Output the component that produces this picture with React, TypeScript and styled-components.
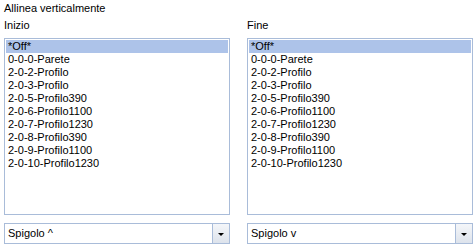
import React from "react";
import styled, { createGlobalStyle } from "styled-components";

const GlobalStyle = createGlobalStyle`
  body {
    margin: 0;
    background: #ffffff;
    font-family: "Liberation Sans", Arial, sans-serif;
    font-size: 11px;
    color: #000000;
  }
`;

const Page = styled.div`
  padding: 2px 2px 0 4px;
  width: 474px;
  box-sizing: border-box;
`;

const Title = styled.div`
  line-height: 13px;
  height: 13px;
  margin-bottom: 4px;
`;

const Columns = styled.div`
  display: grid;
  grid-template-columns: 226px 226px;
  column-gap: 17px;
`;

const Column = styled.div`
  display: flex;
  flex-direction: column;
`;

const Label = styled.div`
  line-height: 13px;
  height: 13px;
  margin-bottom: 6px;
`;

const ListBox = styled.div`
  box-sizing: border-box;
  height: 177px;
  border: 1px solid #a9bcd9;
  padding: 1px;
  background: #ffffff;
  overflow: hidden;
`;

const Item = styled.div<{ $selected?: boolean }>`
  height: 13px;
  line-height: 13px;
  padding-left: 2px;
  white-space: nowrap;
  background: ${(p) => (p.$selected ? "#adc3e9" : "transparent")};
`;

const Combo = styled.div`
  box-sizing: border-box;
  margin-top: 8px;
  height: 21px;
  border: 1px solid #a9bcd9;
  display: flex;
  background: #ffffff;
`;

const ComboText = styled.div`
  flex: 1;
  padding-left: 3px;
  line-height: 19px;
`;

const ComboButton = styled.div`
  width: 16px;
  border-left: 1px solid #a9bcd9;
  background: linear-gradient(#f4f6f9, #dde3ec);
  display: flex;
  align-items: center;
  justify-content: center;
`;

const Arrow = styled.div`
  width: 0;
  height: 0;
  border-left: 3px solid transparent;
  border-right: 3px solid transparent;
  border-top: 3px solid #000000;
  margin-top: 1px;
`;

const items = [
  "*Off*",
  "0-0-0-Parete",
  "2-0-2-Profilo",
  "2-0-3-Profilo",
  "2-0-5-Profilo390",
  "2-0-6-Profilo1100",
  "2-0-7-Profilo1230",
  "2-0-8-Profilo390",
  "2-0-9-Profilo1100",
  "2-0-10-Profilo1230",
];

const Panel: React.FC<{ label: string; value: string }> = ({ label, value }) => (
  <Column>
    <Label>{label}</Label>
    <ListBox>
      {items.map((it, i) => (
        <Item key={it} $selected={i === 0}>
          {it}
        </Item>
      ))}
    </ListBox>
    <Combo>
      <ComboText>{value}</ComboText>
      <ComboButton>
        <Arrow />
      </ComboButton>
    </Combo>
  </Column>
);

export default function App() {
  return (
    <>
      <GlobalStyle />
      <Page>
        <Title>Allinea verticalmente</Title>
        <Columns>
          <Panel label="Inizio" value="Spigolo ^" />
          <Panel label="Fine" value="Spigolo v" />
        </Columns>
      </Page>
    </>
  );
}
